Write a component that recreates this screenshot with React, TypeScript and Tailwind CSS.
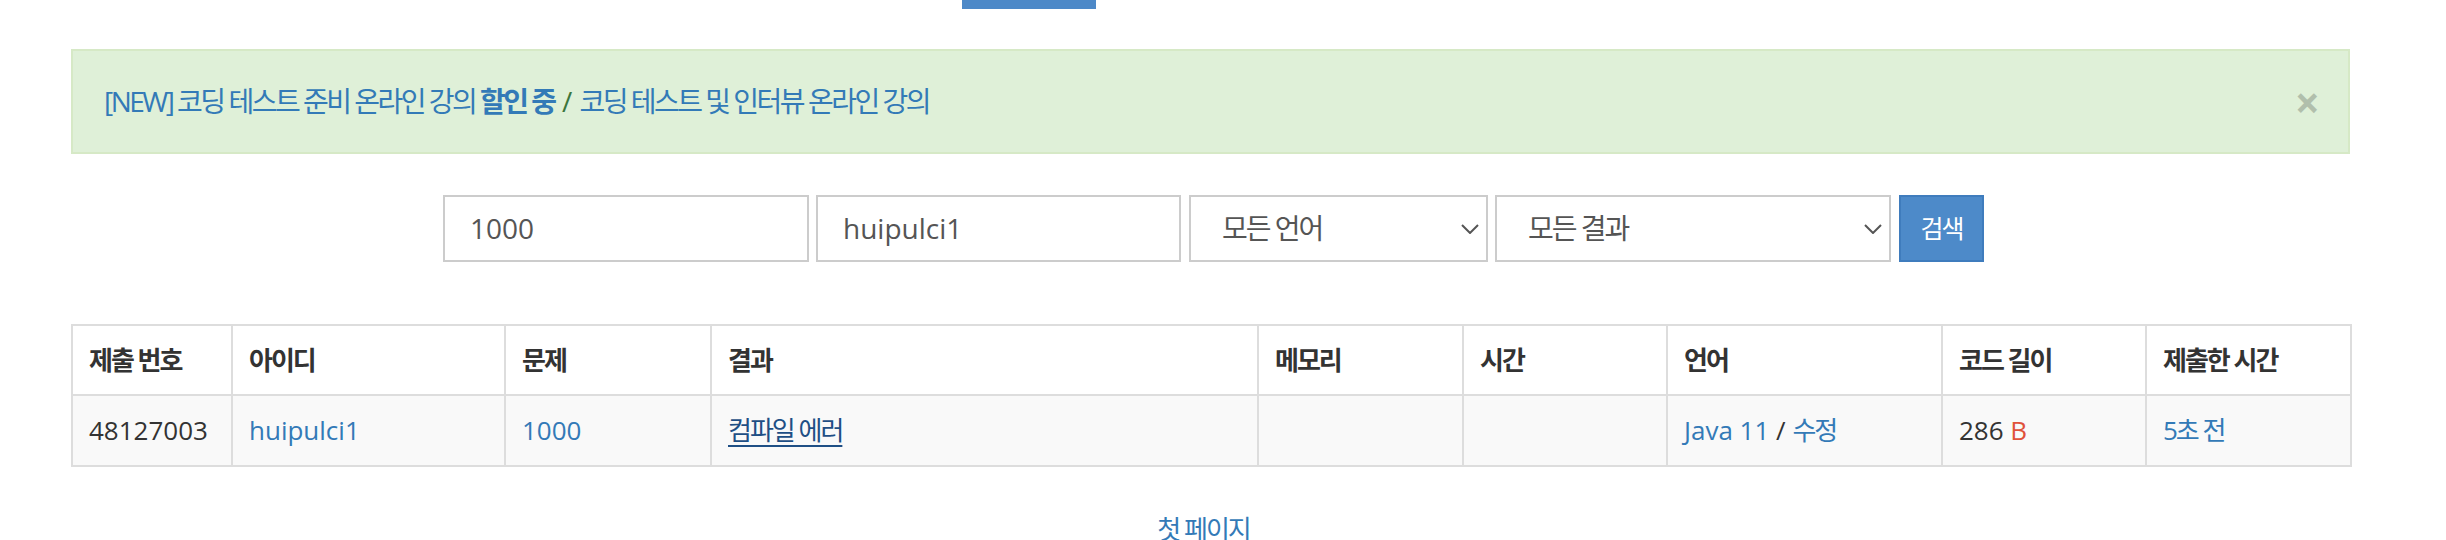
import React from 'react';

const ko = "tracking-[-2px]";
const koAlert = "tracking-[-2.5px]";

function Chevron() {
  return (
    <svg width="18" height="10" viewBox="0 0 18 10" className="absolute right-[7px] top-[27px]">
      <path d="M1 1 L9 9 L17 1" fill="none" stroke="#555" strokeWidth="2" />
    </svg>
  );
}

export default function App() {
  const cols = [160, 273, 206, 547, 205, 204, 275, 204, 205];
  const heads = ['제출 번호', '아이디', '문제', '결과', '메모리', '시간', '언어', '코드 길이', '제출한 시간'];

  return (
    <div className="w-[2446px] h-[540px] overflow-hidden bg-white text-[#333] font-['Open_Sans','Noto_Sans_CJK_KR',sans-serif] text-[26px] leading-[37px]">
      {/* active nav tab underline */}
      <div className="ml-[962px] w-[134px] h-[9px] bg-[#4d89c8]" />

      <div className="ml-[71px] w-[2279px]">
        {/* notice */}
        <div className="mt-[40px] h-[105px] border-2 border-[#d6e9c6] bg-[#dff0d8] flex items-center justify-between pl-[31px] pr-[30px] text-[28px] text-[#3c763d]">
          <div>
            <a className={`text-[#337ab7] ${koAlert}`}>[NEW] 코딩 테스트 준비 온라인 강의 <b>할인 중</b></a>
            {' / '}
            <a className={`text-[#337ab7] ${koAlert}`}>코딩 테스트 및 인터뷰 온라인 강의</a>
          </div>
          <span className="text-[44px] font-bold text-black opacity-20 leading-none mr-[-2px]">×</span>
        </div>

        {/* search form */}
        <div className="mt-[41px] ml-[372px] flex text-[28px] text-[#555]">
          <div className="w-[366px] h-[67px] border-2 border-[#ccc] bg-white flex items-center pl-[25px]">1000</div>
          <div className="ml-[7px] w-[365px] h-[67px] border-2 border-[#ccc] bg-white flex items-center pl-[25px]">huipulci1</div>
          <div className={`relative ml-[8px] w-[299px] h-[67px] border-2 border-[#ccc] bg-white flex items-center pl-[31px] ${ko}`}>
            모든 언어
            <Chevron />
          </div>
          <div className={`relative ml-[7px] w-[396px] h-[67px] border-2 border-[#ccc] bg-white flex items-center pl-[31px] ${ko}`}>
            모든 결과
            <Chevron />
          </div>
          <div className={`ml-[8px] w-[85px] h-[67px] border-2 border-[#3f7cbd] bg-[#4d8ac9] text-white text-[25px] flex items-center justify-center ${ko}`}>
            검색
          </div>
        </div>

        {/* status table */}
        <table className="mt-[62px] w-[2279px] table-fixed border-collapse">
          <colgroup>
            {cols.map((w, i) => (
              <col key={i} style={{ width: w }} />
            ))}
          </colgroup>
          <thead>
            <tr className="h-[70px] bg-white">
              {heads.map((h) => (
                <th key={h} className={`border-2 border-[#ddd] px-[16px] text-left font-bold align-middle ${ko}`}>
                  {h}
                </th>
              ))}
            </tr>
          </thead>
          <tbody>
            <tr className="h-[71px] bg-[#f9f9f9]">
              <td className="border-2 border-[#ddd] px-[16px]">48127003</td>
              <td className="border-2 border-[#ddd] px-[16px]">
                <a className="text-[#337ab7]">huipulci1</a>
              </td>
              <td className="border-2 border-[#ddd] px-[16px]">
                <a className="text-[#337ab7]">1000</a>
              </td>
              <td className="border-2 border-[#ddd] px-[16px]">
                <a className={`text-[#1f4f85] underline decoration-2 underline-offset-[5px] ${ko}`}>컴파일 에러</a>
              </td>
              <td className="border-2 border-[#ddd] px-[16px]" />
              <td className="border-2 border-[#ddd] px-[16px]" />
              <td className="border-2 border-[#ddd] px-[16px]">
                <a className="text-[#337ab7]">Java 11</a> / <a className={`text-[#337ab7] ${ko}`}>수정</a>
              </td>
              <td className="border-2 border-[#ddd] px-[16px]">
                286 <span className="text-[#e0523b]">B</span>
              </td>
              <td className="border-2 border-[#ddd] px-[16px]">
                <a className={`text-[#337ab7] ${ko}`}>5초 전</a>
              </td>
            </tr>
          </tbody>
        </table>

        {/* pagination */}
        <div className="mt-[44px] pr-[14px] text-center">
          <a className={`text-[#337ab7] ${ko}`}>첫 페이지</a>
        </div>
      </div>
    </div>
  );
}
